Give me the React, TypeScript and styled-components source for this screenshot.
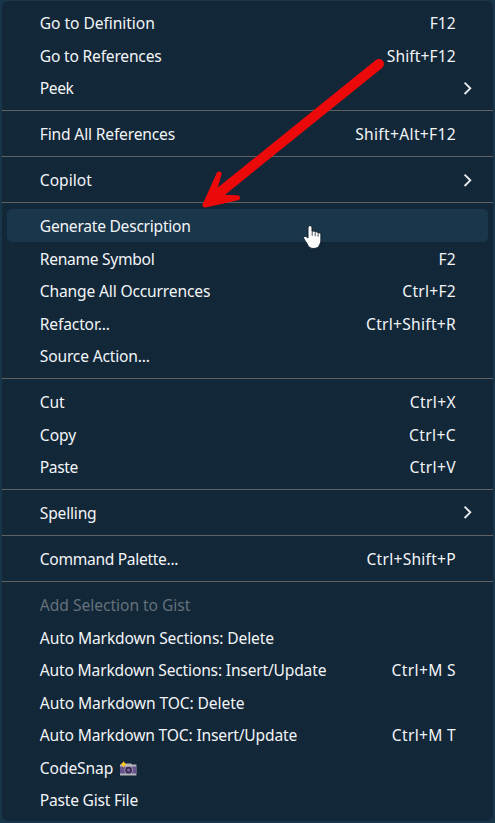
import React from "react";
import styled, { createGlobalStyle } from "styled-components";

const GlobalStyle = createGlobalStyle`
  * { box-sizing: border-box; }
  body { margin: 0; background: #193549; overflow: hidden; }
`;

const Stage = styled.main`
  position: relative;
  width: 495px;
  height: 823px;
  padding: 1px 2px 2px;
  background: #193549;
`;

const Menu = styled.div`
  height: 820px;
  padding-top: 5.3px;
  border-radius: 6px;
  background: #122738;
  color: #f2f5f7;
  font: 400 15.6px/30px "Noto Sans", "Open Sans", sans-serif;
`;

const Row = styled.div<{ $active?: boolean; $disabled?: boolean }>`
  display: flex;
  align-items: center;
  justify-content: space-between;
  height: 32.5px;
  margin: 0 5px;
  padding: 0 32.3px 0 32.8px;
  border-radius: 5px;
  white-space: pre;
  background: ${(p) => (p.$active ? "#1a364a" : "transparent")};
  color: ${(p) => (p.$disabled ? "#65717b" : "inherit")};
`;

const Label = styled.span<{ $tracking?: number }>`
  display: flex;
  align-items: center;
  padding-top: 1.9px;
  letter-spacing: ${(p) => p.$tracking ?? 0}px;
`;

const Shortcut = styled(Label)`
  margin-right: ${(p) => -(p.$tracking ?? 0)}px;
`;

const Divider = styled.div`
  height: 1px;
  margin: 6.2px 0 6.3px;
  background: #606060;
`;

const Chevron = styled.svg`
  width: 10px;
  height: 14px;
  margin: 0 -17px 0 0;
`;

const Camera = styled.svg`
  width: 18px;
  height: 16px;
  margin: 2px 0 0 6px;
`;

const Overlay = styled.svg`
  position: absolute;
  left: 0;
  top: 0;
  pointer-events: none;
`;

type Item = {
  label: string;
  /** Letter spacing of the label, px. */
  t?: number;
  keys?: string;
  /** Letter spacing of the shortcut, px. */
  kt?: number;
  submenu?: boolean;
  active?: boolean;
  disabled?: boolean;
  camera?: boolean;
};

const groups: Item[][] = [
  [
    { label: "Go to Definition", t: -0.06, keys: "F12" },
    { label: "Go to References", t: -0.2, keys: "Shift+F12", kt: 0.1 },
    { label: "Peek", t: -0.45, submenu: true },
  ],
  [{ label: "Find All References", t: -0.17, keys: "Shift+Alt+F12", kt: 0.33 }],
  [{ label: "Copilot", submenu: true }],
  [
    { label: "Generate Description", t: -0.25, active: true },
    { label: "Rename Symbol", t: -0.29, keys: "F2", kt: 0.2 },
    { label: "Change All Occurrences", t: -0.16, keys: "Ctrl+F2", kt: 0.25 },
    { label: "Refactor...", t: -0.15, keys: "Ctrl+Shift+R", kt: 0.27 },
    { label: "Source Action...", t: -0.18 },
  ],
  [
    { label: "Cut", t: -0.13, keys: "Ctrl+X", kt: 0.4 },
    { label: "Copy", keys: "Ctrl+C", kt: 0.4 },
    { label: "Paste", t: -0.4, keys: "Ctrl+V", kt: 0.4 },
  ],
  [{ label: "Spelling", t: -0.19, submenu: true }],
  [{ label: "Command Palette...", t: -0.32, keys: "Ctrl+Shift+P", kt: 0.25 }],
  [
    { label: "Add Selection to Gist", t: -0.03, disabled: true },
    { label: "Auto Markdown Sections: Delete", t: -0.12 },
    { label: "Auto Markdown Sections: Insert/Update", t: -0.18, keys: "Ctrl+M S", kt: 0.35 },
    { label: "Auto Markdown TOC: Delete", t: -0.1 },
    { label: "Auto Markdown TOC: Insert/Update", t: -0.16, keys: "Ctrl+M T", kt: 0.3 },
    { label: "CodeSnap", t: -0.1, camera: true },
    { label: "Paste Gist File", t: -0.23 },
  ],
];

const CameraIcon = () => (
  <Camera viewBox="0 0 18 16">
    <path d="M1 3.6h5.2l1-1h5l1 1H17.4v11H1z" fill="#b5b3bb" />
    <path d="M1 5.6h16.4v6.9H1z" fill="#65538d" />
    <circle cx="9.6" cy="9.2" r="4.1" fill="#b4abc4" />
    <circle cx="9.6" cy="9.2" r="3.4" fill="#35264b" />
    <circle cx="9.6" cy="9.2" r="1.6" fill="#7a67a4" />
    <path d="M4.6 0.2l1.2 1.9 1.9 1.2-1.9 1.2-1.2 1.9-1.2-1.9-1.9-1.2 1.9-1.2z" fill="#ffc928" />
  </Camera>
);

export default function App() {
  return (
    <>
      <GlobalStyle />
      <Stage>
        <Menu role="menu">
          {groups.map((group, i) => (
            <React.Fragment key={i}>
              {i > 0 && <Divider />}
              {group.map((item) => (
                <Row key={item.label} role="menuitem" $active={item.active} $disabled={item.disabled}>
                  <Label $tracking={item.t}>
                    {item.label}
                    {item.camera && <CameraIcon />}
                  </Label>
                  {item.keys && <Shortcut $tracking={item.kt}>{item.keys}</Shortcut>}
                  {item.submenu && (
                    <Chevron viewBox="0 0 10 14" fill="none" stroke="#e8ecef" strokeWidth="1.9">
                      <path d="M1.6 1.6 7.3 7.3l-5.7 5.7" />
                    </Chevron>
                  )}
                </Row>
              ))}
            </React.Fragment>
          ))}
        </Menu>
        <Overlay width="495" height="823" viewBox="0 0 495 823">
          <path d="M379 64 213 198" stroke="#ec0909" strokeWidth="10" strokeLinecap="round" />
          <path
            d="M219 174 205 205 237.5 197.8 217 197 214 192z"
            fill="#ec0909"
            stroke="#ec0909"
            strokeWidth="5"
            strokeLinejoin="round"
          />
          <path
            d="M308 227.8c0-2.9 4-2.9 4 0v3.6c.9-.7 2.7-.4 3.1.6.9-.6 2.5-.2 2.9.9 1.2-.5 2.9.2 2.9 1.8v5.3c0 2.3-.7 3.9-1.7 5.4 0 1.8-3.2 3.1-5.5 3.1-2.7 0-5.2-1.2-5.7-3.1-.7-1.7-1.6-2.7-2.5-4l-1.6-2.6c-1-1.8.9-3.2 2.5-2l1.6 1.2z"
            fill="#fff"
            stroke="#14202c"
            strokeWidth="1"
          />
          <path d="M312.2 231.5v4.3M315.2 232.5v3.8M318.1 233.5v3.2" stroke="#14202c" strokeWidth=".8" />
        </Overlay>
      </Stage>
    </>
  );
}
